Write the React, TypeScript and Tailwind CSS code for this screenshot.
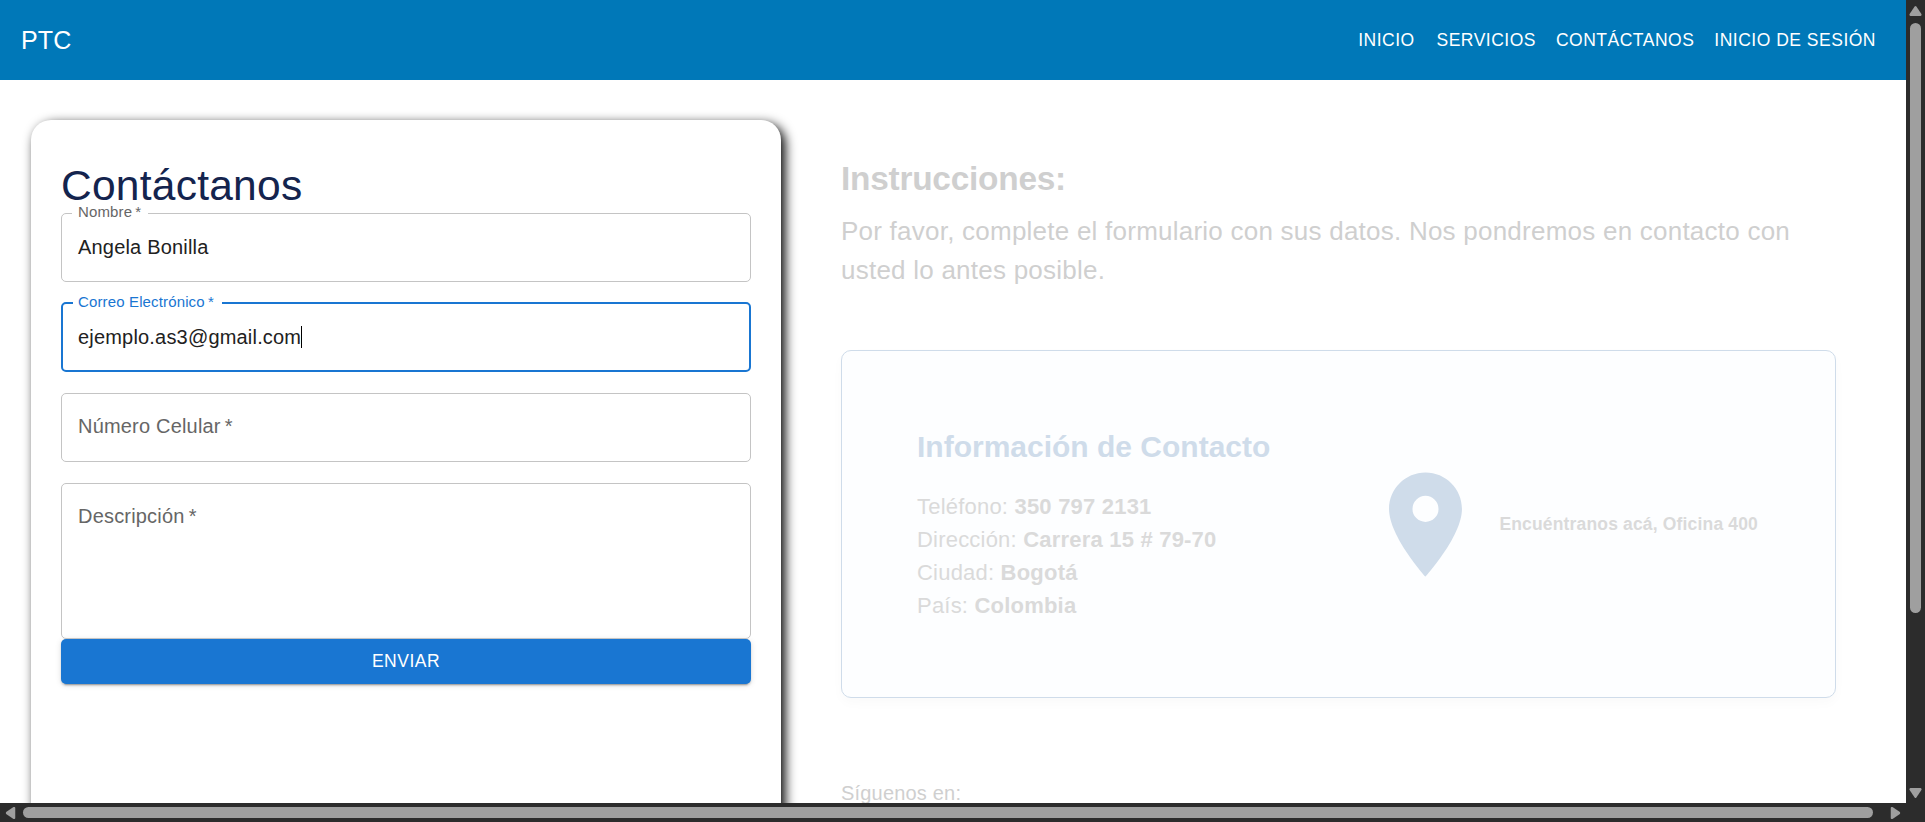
import React from "react";

const FONT = "font-['Liberation_Sans',Arial,sans-serif]";

function NavBar() {
  const base = "min-w-[80px] px-2.5 text-center text-[17.5px] leading-[30px] tracking-[0.5px] whitespace-nowrap";
  return (
    <header className="flex h-20 items-center justify-between bg-[#0078b8] pl-[21px] pr-5 text-white">
      <span className="text-[25px] leading-10 tracking-[0.1875px]">PTC</span>
      <nav className="flex items-center">
        {["INICIO", "SERVICIOS", "CONTÁCTANOS", "INICIO DE SESIÓN"].map((t) => (
          <a key={t} className={base}>{t}</a>
        ))}
      </nav>
    </header>
  );
}

function Field(props: { label: string; value?: string; focused?: boolean; className: string; labelWidth?: string; textTop: string }) {
  const { label, value, focused, className, labelWidth, textTop } = props;
  return (
    <div
      className={`relative rounded-[5px] ${focused ? "border-2 border-[#1976d2] px-[15px]" : "border border-[#c4c4c4] px-4"} ${className}`}
    >
      {value && (
        <span
          className={`absolute -top-[11px] left-[10px] bg-white text-[15px] leading-[18px] tracking-[0.14px] whitespace-nowrap ${labelWidth} ${
            focused ? "pl-[5px] text-[#1976d2]" : "pl-1.5 text-[#666666]"
          }`}
        >
          {label}
          {"\u2009*"}
        </span>
      )}
      <div className={`flex items-center text-xl leading-7 tracking-[0.1876px] ${textTop} ${value ? "text-[#212121]" : "text-[#666666]"}`}>
        {value || `${label}\u2009*`}
        {focused && <span className="h-[22px] w-px bg-black" />}
      </div>
    </div>
  );
}

function ContactForm() {
  return (
    <form className="ml-[31px] mt-10 h-[900px] w-[750px] shrink-0 rounded-[20px] bg-white px-[30px] pt-[45px] shadow-[4px_4px_12px_#000000]">
      <h1 className="h-12 text-[42.5px] leading-[42px] tracking-[0.25px] text-[#14244e]">Contáctanos</h1>
      <Field label="Nombre" value="Angela Bonilla" className="h-[69px]" labelWidth="w-[76px]" textTop="pt-[19px]" />
      <Field label="Correo Electrónico" value="ejemplo.as3@gmail.com" focused className="mt-5 h-[70px]" labelWidth="w-[149px]" textTop="pt-[19px]" />
      <Field label="Número Celular" className="mt-[21px] h-[69px]" textTop="pt-[18px]" />
      <Field label="Descripción" className="mt-[21px] h-[156px]" textTop="pt-[18px]" />
      <button
        type="button"
        className="flex h-[45px] w-full items-center justify-center rounded-[5px] bg-[#1976d2] text-[17.5px] tracking-[0.5px] text-white shadow-[0_4px_1px_-3px_rgba(0,0,0,0.2),0_2px_2px_0_rgba(0,0,0,0.14),0_1px_6px_0_rgba(0,0,0,0.12)]"
      >
        ENVIAR
      </button>
    </form>
  );
}

const details = [
  ["Teléfono:", "350 797 2131"],
  ["Dirección:", "Carrera 15 # 79-70"],
  ["Ciudad:", "Bogotá"],
  ["País:", "Colombia"],
];

function ContactCard() {
  return (
    <section className="mt-[60px] flex h-[348px] w-[995px] items-center justify-between rounded-[10px] border border-[#cfdcea] bg-[#fdfeff] pl-[75px] pr-[77px] shadow-[0_5px_12px_rgba(0,0,0,0.025)]">
      <div>
        <h2 className="text-[30px] font-bold leading-10 text-[#cfdcea]">Información de Contacto</h2>
        <div className="mt-[23px] text-[22px] leading-[33px] tracking-[0.206px] text-[#dadada]">
          {details.map(([k, v]) => (
            <p key={k}>
              {k} <b>{v}</b>
            </p>
          ))}
        </div>
      </div>
      <div className="flex items-center gap-[11px]">
        <svg viewBox="0 0 24 24" className="size-[125px] fill-[#cfdcea]">
          <path d="M12 2C8.13 2 5 5.13 5 9c0 5.25 7 13 7 13s7-7.75 7-13c0-3.87-3.13-7-7-7zm0 9.5a2.5 2.5 0 0 1 0-5 2.5 2.5 0 0 1 0 5z" />
        </svg>
        <span className="text-[17.5px] font-bold leading-[27px] tracking-[0.164px] text-[#dadada]">Encuéntranos acá, Oficina 400</span>
      </div>
    </section>
  );
}

function InfoPanel() {
  return (
    <div className="pl-[60px] pt-[79px] text-[#cfcfcf]">
      <h2 className="text-[33.4px] font-bold leading-10 tracking-[-0.23px]">Instrucciones:</h2>
      <p className="mt-[13px] w-[995px] text-[26px] leading-[39px] tracking-[0.235px]">
        Por favor, complete el formulario con sus datos. Nos pondremos en contacto con usted lo antes posible.
      </p>
      <ContactCard />
      <p className="mt-20 text-xl leading-[30px] tracking-[0.1876px]">Síguenos en:</p>
    </div>
  );
}

function Arrow({ className }: { className: string }) {
  return (
    <svg viewBox="0 0 13 10" className={`h-[10px] w-[13px] shrink-0 fill-[#9f9f9f] ${className}`}>
      <path d="M5.6.6Q6.5-.4 7.4.6L12.4 8Q13 9.6 11.6 10H1.4Q0 9.6.6 8Z" />
    </svg>
  );
}

export default function App() {
  return (
    <div className={`grid h-[822px] w-[1925px] grid-cols-[1906px_19px] grid-rows-[803px_19px] overflow-hidden bg-[#2c2c2c] ${FONT}`}>
      <main className="overflow-hidden bg-white">
        <NavBar />
        <div className="flex items-start">
          <ContactForm />
          <InfoPanel />
        </div>
      </main>
      <div className="flex flex-col items-center pb-[5px] pt-1.5">
        <Arrow className="" />
        <div className="mt-[7px] h-[590px] w-[11px] rounded-full bg-[#9f9f9f]" />
        <Arrow className="mt-auto rotate-180" />
      </div>
      <div className="flex items-center pl-1 pr-1">
        <Arrow className="-rotate-90" />
        <div className="ml-1.5 h-[11px] w-[1850px] rounded-full bg-[#9f9f9f]" />
        <Arrow className="ml-auto rotate-90" />
      </div>
    </div>
  );
}
